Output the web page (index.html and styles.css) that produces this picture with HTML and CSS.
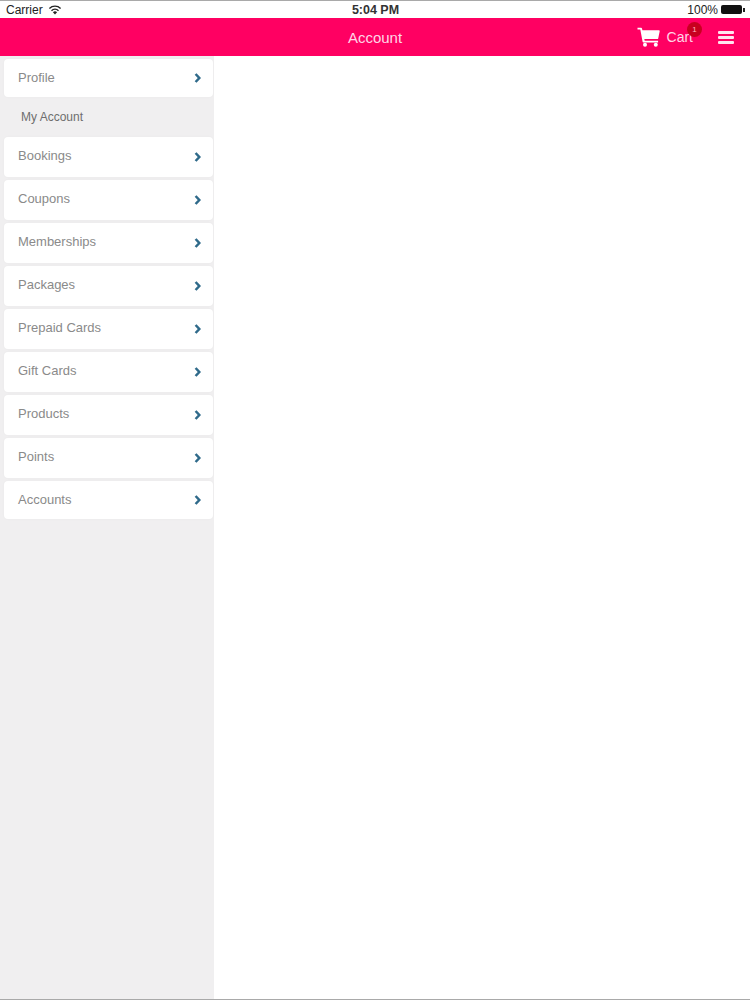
FILE: index.html
```html
<!DOCTYPE html>
<html lang="en">
<head>
    <meta charset="UTF-8">
    <meta name="viewport" content="width=device-width, initial-scale=1.0">
    <title>Account</title>
    <link rel="stylesheet" href="styles.css">
</head>
<body>
    <div class="status-bar">
        <div class="status-left">
            <span>Carrier</span>
            <svg class="wifi" width="14" height="10" viewBox="0 0 14 10">
                <path d="M7 9.6 4.9 7.2a3 3 0 0 1 4.2 0z" fill="#222"/>
                <path d="M3.5 5.7a5 5 0 0 1 7 0M1.4 3.4a8 8 0 0 1 11.2 0" fill="none" stroke="#222" stroke-width="1.4"/>
            </svg>
        </div>
        <div class="status-time">5:04 PM</div>
        <div class="status-right">
            <span>100%</span>
            <span class="battery"></span>
            <span class="battery-tip"></span>
        </div>
    </div>

    <header class="topbar">
        <div class="topbar-title">Account</div>
        <div class="topbar-actions">
            <div class="cart">
                <svg class="cart-icon" width="23" height="20" viewBox="0 0 23 20">
                    <path d="M0.5 0.8h3.6c.5 0 .8.3.9.7l.4 1.800h16.600c.5 0 .8.4.7.9l-1.500 7.200c-.1.4-.4.6-.8.6H7.300l.4 1.800h13.400v1.600H6.400c-.4 0-.7-.3-.8-.7L3.300 2.400H.5z" fill="#fff"/>
                    <circle cx="8" cy="17.800" r="2" fill="#fff"/>
                    <circle cx="18.800" cy="17.800" r="2" fill="#fff"/>
                </svg>
                <span class="cart-label">Cart</span>
                <span class="cart-badge">1</span>
            </div>
            <div class="menu-icon">
                <span></span>
                <span></span>
                <span></span>
            </div>
        </div>
    </header>

    <div class="main">
        <aside class="sidebar">
            <a class="side-item side-item-short">Profile<svg class="chevron" width="8" height="10" viewBox="0 0 8 10"><path d="M1.600 1 5.300 5 1.600 9" fill="none" stroke="#2f6a8a" stroke-width="2.500"/></svg></a>
            <div class="side-heading">My Account</div>
            <a class="side-item">Bookings<svg class="chevron" width="8" height="10" viewBox="0 0 8 10"><path d="M1.600 1 5.300 5 1.600 9" fill="none" stroke="#2f6a8a" stroke-width="2.500"/></svg></a>
            <a class="side-item">Coupons<svg class="chevron" width="8" height="10" viewBox="0 0 8 10"><path d="M1.600 1 5.300 5 1.600 9" fill="none" stroke="#2f6a8a" stroke-width="2.500"/></svg></a>
            <a class="side-item">Memberships<svg class="chevron" width="8" height="10" viewBox="0 0 8 10"><path d="M1.600 1 5.300 5 1.600 9" fill="none" stroke="#2f6a8a" stroke-width="2.500"/></svg></a>
            <a class="side-item">Packages<svg class="chevron" width="8" height="10" viewBox="0 0 8 10"><path d="M1.600 1 5.300 5 1.600 9" fill="none" stroke="#2f6a8a" stroke-width="2.500"/></svg></a>
            <a class="side-item">Prepaid Cards<svg class="chevron" width="8" height="10" viewBox="0 0 8 10"><path d="M1.600 1 5.300 5 1.600 9" fill="none" stroke="#2f6a8a" stroke-width="2.500"/></svg></a>
            <a class="side-item">Gift Cards<svg class="chevron" width="8" height="10" viewBox="0 0 8 10"><path d="M1.600 1 5.300 5 1.600 9" fill="none" stroke="#2f6a8a" stroke-width="2.500"/></svg></a>
            <a class="side-item">Products<svg class="chevron" width="8" height="10" viewBox="0 0 8 10"><path d="M1.600 1 5.300 5 1.600 9" fill="none" stroke="#2f6a8a" stroke-width="2.500"/></svg></a>
            <a class="side-item">Points<svg class="chevron" width="8" height="10" viewBox="0 0 8 10"><path d="M1.600 1 5.300 5 1.600 9" fill="none" stroke="#2f6a8a" stroke-width="2.500"/></svg></a>
            <a class="side-item side-item-short">Accounts<svg class="chevron" width="8" height="10" viewBox="0 0 8 10"><path d="M1.600 1 5.300 5 1.600 9" fill="none" stroke="#2f6a8a" stroke-width="2.500"/></svg></a>
        </aside>
        <div class="content"></div>
    </div>
</body>
</html>
```

FILE: styles.css
```css
* {
    box-sizing: border-box;
}
html, body {
    margin: 0;
    height: 1000px;
    overflow: hidden;
}
body {
    font-family: "Liberation Sans", Arial, sans-serif;
    background: white;
    border-top: 1px solid #a9a9a9;
    border-bottom: 1px solid #a9a9a9;
    display: flex;
    flex-direction: column;
}
.status-bar {
    height: 17px;
    flex: none;
    display: grid;
    grid-template-columns: 1fr auto 1fr;
    align-items: center;
    padding: 0 5px 0 6px;
    font-size: 12px;
    color: #222;
}
.status-left {
    display: flex;
    align-items: center;
    gap: 5px;
}
.status-time {
    font-weight: bold;
    font-size: 12.500px;
    color: #333;
}
.status-right {
    display: flex;
    align-items: center;
    justify-content: flex-end;
}
.battery {
    width: 21px;
    height: 9px;
    margin-left: 3px;
    background: #111;
    border-radius: 2px;
}
.battery-tip {
    width: 2px;
    height: 4px;
    margin-left: 1px;
    background: #222;
}
.topbar {
    position: relative;
    height: 38px;
    flex: none;
    background: #ff0062;
    color: white;
    display: flex;
    align-items: center;
    justify-content: flex-end;
    padding-right: 16px;
}
.topbar-title {
    position: absolute;
    left: 0;
    right: 0;
    text-align: center;
    font-size: 15px;
    color: #ffd5e6;
}
.topbar-actions {
    display: flex;
    align-items: center;
    gap: 25px;
}
.cart {
    position: relative;
    display: flex;
    align-items: center;
    gap: 7px;
}
.cart-icon {
    margin-left: -1px;
}
.cart-label {
    font-size: 14px;
    color: #ffd5e6;
}
.cart-badge {
    position: absolute;
    top: -5px;
    right: -9px;
    width: 15px;
    height: 15px;
    border-radius: 50%;
    background: #c8001f;
    color: #ffb0c0;
    font-size: 8px;
    line-height: 15px;
    text-align: center;
}
.menu-icon {
    display: flex;
    flex-direction: column;
    gap: 2px;
    width: 16px;
}
.menu-icon span {
    height: 3px;
    background: #ffe3ee;
    border-radius: 1px;
}
.main {
    flex: 1;
    display: flex;
    min-height: 0;
}
.sidebar {
    width: 214px;
    flex: none;
    background: #f0eff0;
    padding: 3px 1px 0 4px;
    display: flex;
    flex-direction: column;
    gap: 3px;
}
.side-item {
    height: 40px;
    display: flex;
    align-items: center;
    justify-content: space-between;
    padding: 0 11px 4px 14px;
    background: white;
    border-radius: 4px;
    box-shadow: 0 0 3px rgba(0,0,0,0.03);
    font-size: 13px;
    color: #8a8a8a;
}
.side-item .chevron {
    margin-bottom: -4px;
}
.side-item-short {
    height: 38px;
    padding-bottom: 2px;
}
.side-item-short .chevron {
    margin-bottom: -2px;
}
.side-heading {
    height: 40px;
    margin: -3px 0;
    padding-left: 17px;
    display: flex;
    align-items: center;
    font-size: 12px;
    color: #6e6e6e;
}
.content {
    flex: 1;
    background: white;
}
```
